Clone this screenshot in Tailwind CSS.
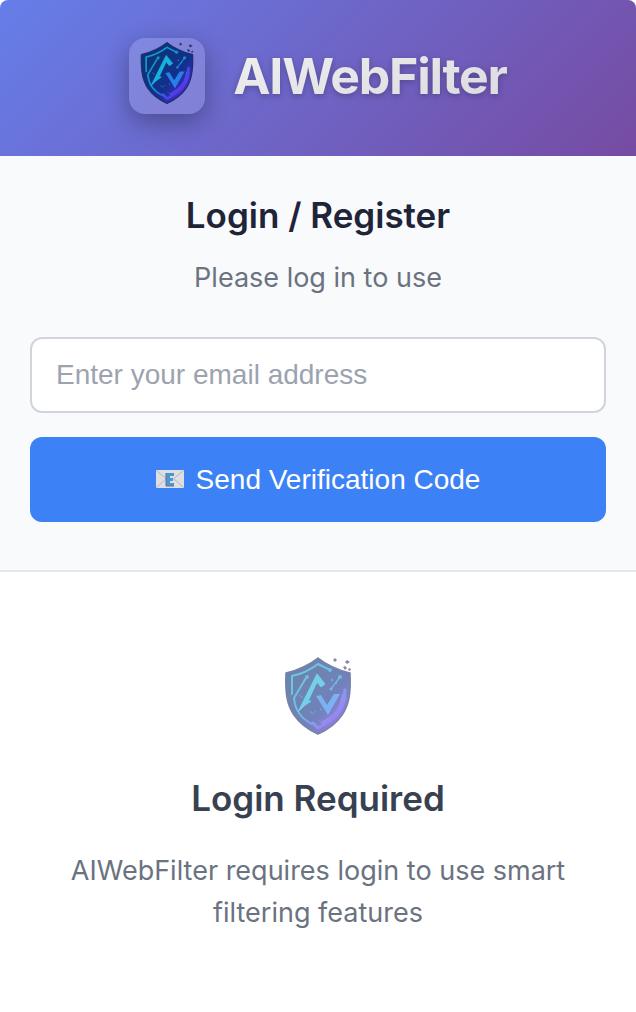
<!DOCTYPE html>
<html lang="en">
<head>
<meta charset="utf-8">
<meta name="viewport" content="width=device-width, initial-scale=1">
<title>AIWebFilter</title>
<script src="https://cdn.jsdelivr.net/npm/@tailwindcss/browser@4"></script>
</head>
<body class="bg-white font-['Inter',sans-serif]">
<svg class="absolute size-0" aria-hidden="true">
  <defs>
    <linearGradient id="fill" x1="0" y1="0" x2="1" y2="1">
      <stop offset="0.25" stop-color="#0c3478"/><stop offset="0.6" stop-color="#12308c"/><stop offset="0.85" stop-color="#4a2bd0"/>
    </linearGradient>
    <linearGradient id="line" gradientUnits="userSpaceOnUse" x1="20" y1="30" x2="74" y2="80">
      <stop offset="0" stop-color="#12a5cf"/><stop offset="0.5" stop-color="#1687d8"/><stop offset="0.85" stop-color="#5a33ea"/>
    </linearGradient>
  </defs>
  <symbol id="shield" viewBox="8 12 80 80">
    <path d="M48 14C57 21 68 26 80 29C81 49 79 61 72 71C66 80 57 86 48 90C39 86 30 80 24 71C17 61 15 49 16 29C28 26 39 21 48 14Z" fill="url(#fill)" stroke="#1b2f70" stroke-width="1.5"/>
    <g fill="none" stroke="url(#line)" stroke-linecap="round" stroke-linejoin="round">
      <path d="M22 50V32C32 30 40 26 48 20L60 26" stroke-width="2"/>
      <path d="M24 54L36 34M24 54C25 66 32 75 42 80" stroke-width="2"/>
      <path d="M61 45L70 33" stroke-width="1.5"/>
      <path d="M75 46C74 66 65 75 48 84L43 79" stroke-width="3"/>
      <path d="M74 52C72 66 65 73 54 79" stroke-width="5"/>
    </g>
    <path d="M28 68L36 52L47 30L55 40L51 43L47 38L38 57H41L34 62Z" fill="#18b2dd" stroke="#18b2dd" stroke-linejoin="round"/>
    <path d="M46 52L51 51L57 61L64 50L70 50L58 71Z" fill="#287fea"/>
    <g fill="#148fd0"><circle cx="60" cy="26" r="2"/><circle cx="37" cy="33" r="2"/><circle cx="70" cy="33" r="2"/><circle cx="61" cy="45" r="1.5"/><circle cx="62" cy="36" r="1"/><circle cx="66" cy="39" r="1"/></g>
    <g fill="none" stroke="#2467bb" stroke-width="1"><path d="M29 51L33 54M40 67L42 70L46 67M49 76L52 79M51 64V67"/></g>
    <g fill="#353a72"><path d="M63 16l2-2 2 2-2 2zM75 18l2-2 3 2-3 2zM73 23l2-1 2 2-2 2zM78 25l2-1 1 2-2 1z"/></g>
  </symbol>
</svg>
<main class="min-h-screen overflow-hidden rounded-t-lg">
  <header class="flex items-center justify-center gap-7 bg-[linear-gradient(135deg,#667eea_0%,#764ba2_100%)] pt-[38px] pb-[42px]">
    <div class="flex size-[76px] justify-center rounded-2xl bg-white/15 pt-[3px] shadow-[0_8px_24px_rgba(0,0,0,0.3)]">
      <svg class="size-16" role="img" aria-label="AIWebFilter logo"><use href="#shield"/></svg>
    </div>
    <h1 class="bg-linear-to-br from-[#f1f1f1] to-[#d9d8de] bg-clip-text text-[50px]/[76px] font-bold tracking-tight text-transparent drop-shadow-[0_2px_3px_rgba(0,0,0,0.25)]">AIWebFilter</h1>
  </header>
  <section class="border-b-2 border-[#e5e7eb] bg-[#f9fafc] px-[30px] pt-[35px] pb-12 text-center">
    <h2 class="text-[35px]/[48px] font-semibold text-[#1f2438]">Login / Register</h2>
    <p class="mt-4 text-[27px]/[46px] text-[#6b7280]">Please log in to use</p>
    <form class="mt-9 flex flex-col gap-6">
      <input type="email" aria-label="Email address" placeholder="Enter your email address" class="h-[76px] w-full rounded-xl border-2 border-[#d1d5db] bg-white px-6 font-['Liberation_Sans',Arial,sans-serif] text-[28px] placeholder:text-[#9ca3af]">
      <button type="button" class="flex h-[85px] w-full items-center justify-center gap-3 rounded-xl bg-[#3c82f6] font-['Liberation_Sans',Arial,sans-serif] text-[28px] text-white">
        <svg class="h-5 w-7" viewBox="0 0 28 20" aria-hidden="true">
          <rect width="28" height="18" rx="1" fill="#dedfe3"/>
          <path d="M1 17L10 9M27 17L18 9M1 1L12 10Q14 12 16 10L27 1" fill="none" stroke="#b4b7be"/>
          <path d="M10 3H18V6H14V8H17V11H14V13H18V16H10Z" fill="#4c96d2"/>
          <path d="M10 3V16H18" fill="none" stroke="#5275a0"/>
        </svg>
        <span>Send Verification Code</span>
      </button>
    </form>
  </section>
  <section class="px-[60px] pt-[84px] pb-14 text-center">
    <svg class="mx-auto size-20 opacity-60" role="img" aria-label="AIWebFilter logo"><use href="#shield"/></svg>
    <h2 class="mt-[38px] text-[35px]/[48px] font-semibold text-[#374151]">Login Required</h2>
    <p class="mt-7 text-[27px]/[42px] text-[#6b7280]">AIWebFilter requires login to use smart filtering features</p>
  </section>
</main>
</body>
</html>
